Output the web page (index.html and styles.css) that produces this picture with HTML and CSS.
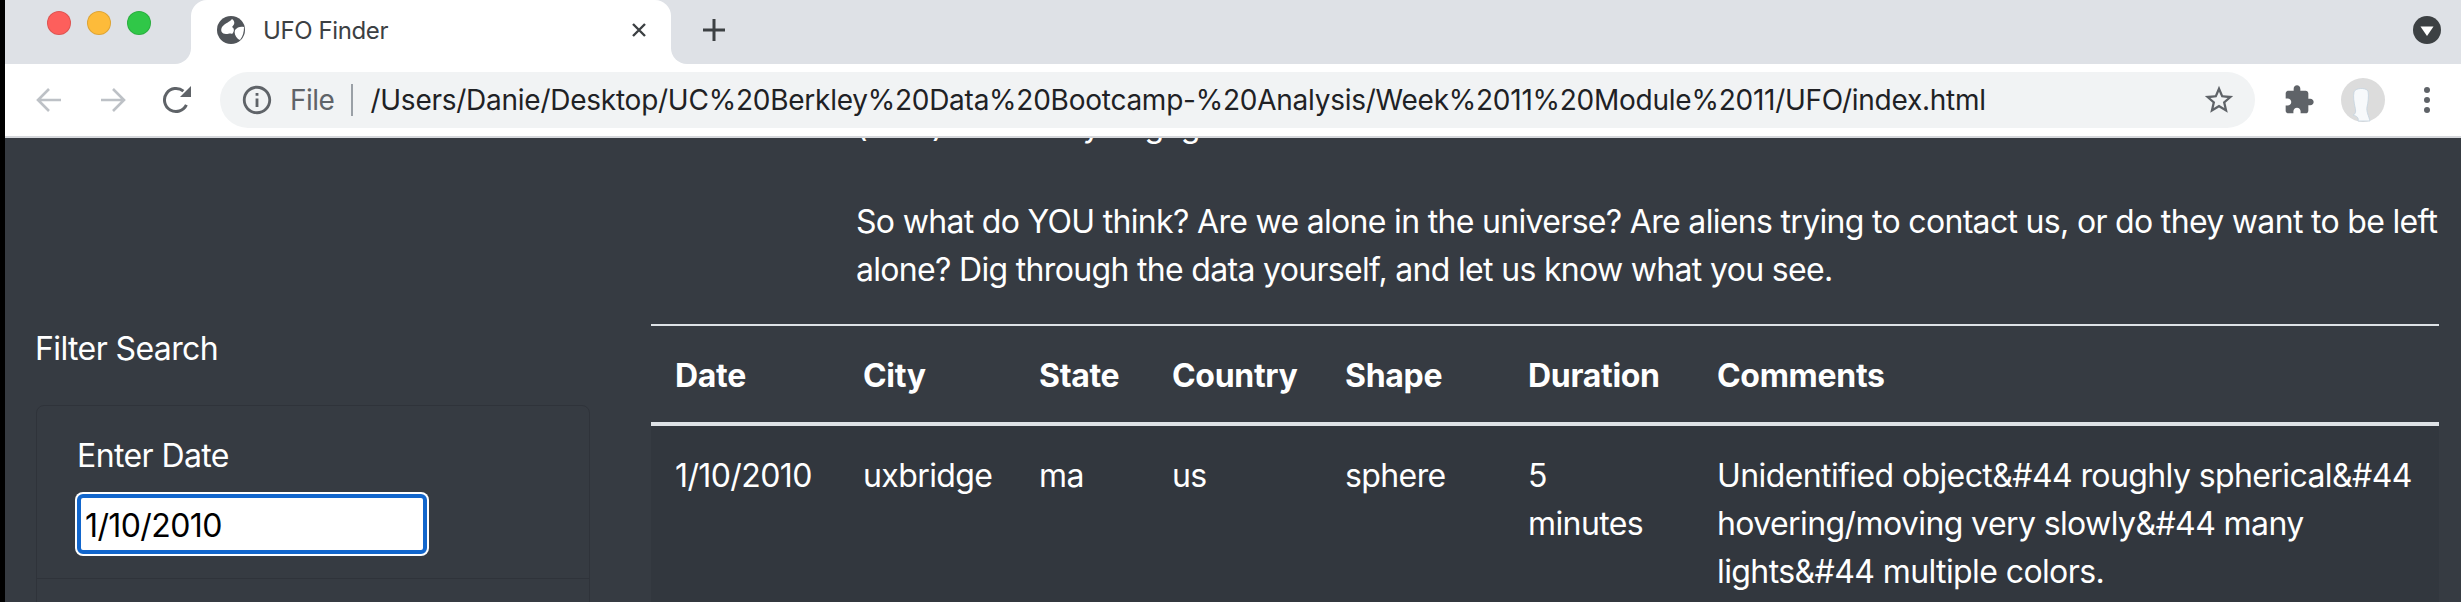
FILE: index.html

```html
<!DOCTYPE html>
<html lang="en">
<head>
  <meta charset="UTF-8" />
  <title>UFO Finder</title>
  <link rel="stylesheet" href="styles.css">
</head>
<body>
  <div class="edge"></div>
  <div class="window">
    <div class="tabstrip">
      <div class="lights">
        <span class="light red"></span>
        <span class="light yellow"></span>
        <span class="light green"></span>
      </div>
      <div class="tab">
        <svg class="globe" viewBox="0 0 28 28">
          <circle cx="14" cy="14" r="14" fill="#505459"/>
          <path d="M15 3C13 6 8 7 5 11C3 15 5 18 9 18C12 18 13 17 15 18C18 15 17 12 15 11C17 9 19 6 15 3z" fill="#fff"/>
          <path d="M27 11C24 10 20 11 18 14C17 17 18 20 21 23L23 24C26 20 27 16 27 11z" fill="#fff"/>
        </svg>
        <span class="tab-title">UFO Finder</span>
        <svg class="tab-close" viewBox="0 0 16 16"><path d="M2 2l12 12M14 2L2 14"/></svg>
      </div>
      <div class="strip-rest">
        <svg class="new-tab" viewBox="0 0 24 24"><path d="M12 1v22M1 12h22"/></svg>
        <span class="tab-search"><svg viewBox="0 0 28 28"><path d="M7.5 10.5h13L14 20z"/></svg></span>
      </div>
    </div>

    <div class="toolbar">
      <span class="slot"><svg class="arrow" viewBox="0 0 26 26"><path d="M25 13H2M13 2L2 13l11 11"/></svg></span>
      <span class="slot"><svg class="arrow" viewBox="0 0 26 26"><path d="M1 13h23M13 2l11 11-11 11"/></svg></span>
      <span class="slot">
        <svg class="reload" viewBox="0 0 28 28">
          <path class="reload-arc" d="M23.4 18.9A11.5 11.5 0 1 1 20.4 5.2"/>
          <path d="M28 0V11H17z"/>
        </svg>
      </span>
      <div class="omnibox">
        <svg class="ico info" viewBox="0 0 24 24"><path d="M11 7h2v2h-2zm0 4h2v6h-2zm1-9C6.48 2 2 6.48 2 12s4.48 10 10 10 10-4.48 10-10S17.52 2 12 2zm0 18c-4.41 0-8-3.59-8-8s3.59-8 8-8 8 3.59 8 8-3.59 8-8 8z"/></svg>
        <span class="scheme">File</span>
        <span class="omni-sep"></span>
        <span class="url">/Users/Danie/Desktop/UC%20Berkley%20Data%20Bootcamp-%20Analysis/Week%2011%20Module%2011/UFO/index.html</span>
        <svg class="ico star" viewBox="0 0 24 24"><path d="M22 9.24l-7.19-.62L12 2 9.19 8.63 2 9.24l5.46 4.73L5.82 21 12 17.27 18.18 21l-1.63-7.03L22 9.24zM12 15.4l-3.76 2.27 1-4.28-3.32-2.88 4.38-.38L12 6.1l1.71 4.04 4.38.38-3.32 2.88 1 4.28L12 15.4z"/></svg>
      </div>
      <div class="toolbar-right">
        <span class="slot"><svg class="ico puzzle" viewBox="0 0 24 24"><path d="M20.5 11H19V7c0-1.1-.9-2-2-2h-4V3.5C13 2.12 11.88 1 10.5 1S8 2.12 8 3.5V5H4c-1.1 0-1.99.9-1.99 2v3.8H3.5c1.49 0 2.7 1.21 2.7 2.7s-1.21 2.7-2.7 2.7H2V20c0 1.1.9 2 2 2h3.8v-1.5c0-1.49 1.21-2.7 2.7-2.7 1.49 0 2.7 1.21 2.7 2.7V22H17c1.1 0 2-.9 2-2v-4h1.5c1.38 0 2.5-1.12 2.5-2.5S21.88 11 20.5 11z"/></svg></span>
        <span class="slot">
          <svg class="avatar" viewBox="0 0 44 44">
            <circle cx="22" cy="22" r="22" fill="#dcdcdc"/>
            <path d="M13 14c1-4 11-5 14-1c1 5 0 12-1 16c-1 4 2 10 3 14H17c1-3-1-5-5-6c3-1 3-4 2-8c-1-5-2-10-1-15z" fill="#f7f9fb" stroke="#c4d3e0" stroke-width="0.8"/>
          </svg>
        </span>
        <span class="slot">
          <svg class="dots" viewBox="0 0 8 28"><circle cx="4" cy="4" r="3"/><circle cx="4" cy="14" r="3"/><circle cx="4" cy="24" r="3"/></svg>
        </span>
      </div>
    </div>

    <div class="page">
      <aside class="sidebar">
        <div class="filter-title">Filter Search</div>
        <div class="card">
          <div class="card-row">
            <label class="field-label" for="date">Enter Date</label>
            <input class="field" id="date" type="text" value="1/10/2010" />
          </div>
          <div class="card-row"></div>
        </div>
      </aside>

      <main class="content">
        <div class="intro">
          <p>(UFO) who really engage</p>
          <p>So what do YOU think? Are we alone in the universe? Are aliens trying to contact us, or do they want to be left alone? Dig through the data yourself, and let us know what you see.</p>
        </div>
        <table class="ufo-table">
          <colgroup>
            <col class="c-date"><col class="c-city"><col class="c-state"><col class="c-country"><col class="c-shape"><col class="c-duration"><col>
          </colgroup>
          <thead>
            <tr>
              <th>Date</th>
              <th>City</th>
              <th>State</th>
              <th>Country</th>
              <th>Shape</th>
              <th>Duration</th>
              <th>Comments</th>
            </tr>
          </thead>
          <tbody>
            <tr>
              <td>1/10/2010</td>
              <td>uxbridge</td>
              <td>ma</td>
              <td>us</td>
              <td>sphere</td>
              <td>5 minutes</td>
              <td>Unidentified object&amp;#44 roughly spherical&amp;#44 hovering/moving very slowly&amp;#44 many lights&amp;#44 multiple colors.</td>
            </tr>
          </tbody>
        </table>
      </main>
    </div>
  </div>
</body>
</html>
```

FILE: styles.css

```css
* { box-sizing: border-box; }

html, body {
  margin: 0;
  height: 100%;
  overflow: hidden;
}
body {
  display: flex;
  font-family: "Inter", "Liberation Sans", sans-serif;
  background: #000;
}
.edge {
  width: 5px;
  flex: none;
  background: #000;
}
.window {
  flex: 1;
  min-width: 0;
  display: flex;
  flex-direction: column;
}

/* tab strip */
.tabstrip {
  height: 64px;
  flex: none;
  display: flex;
  background: linear-gradient(#dee1e6 50%, #fff 50%);
}
.lights {
  width: 186px;
  background: #dee1e6;
  border-bottom-right-radius: 16px;
  display: flex;
  gap: 16px;
  padding: 11px 0 0 42px;
}
.light {
  width: 24px;
  height: 24px;
  border-radius: 50%;
  border: 1px solid rgba(0, 0, 0, .12);
}
.red { background: #fd5f5c; }
.yellow { background: #fdbb3a; }
.green { background: #30c748; }

.tab {
  width: 480px;
  background: #fff;
  border-radius: 16px 16px 0 0;
  display: flex;
  align-items: center;
  padding: 0 24px 4px 26px;
}
.globe {
  width: 28px;
  height: 28px;
  flex: none;
}
.tab-title {
  margin-left: 18px;
  font-size: 24px;
  color: #3c4043;
  letter-spacing: -.4px;
}
.tab-close {
  margin-left: auto;
  width: 16px;
  height: 16px;
  fill: none;
  stroke: #3c4043;
  stroke-width: 2.4;
}
.strip-rest {
  flex: 1;
  background: #dee1e6;
  border-bottom-left-radius: 16px;
  display: flex;
  align-items: center;
  padding: 0 20px 4px 31px;
}
.new-tab {
  width: 24px;
  height: 24px;
  fill: none;
  stroke: #3c4043;
  stroke-width: 3;
}
.tab-search {
  margin-left: auto;
  width: 28px;
  height: 28px;
  border-radius: 50%;
  background: #3c4043;
}
.tab-search svg {
  display: block;
  fill: #fff;
}

/* toolbar */
.toolbar {
  height: 74px;
  flex: none;
  background: #fff;
  border-bottom: 2px solid #d5d7db;
  display: flex;
  align-items: center;
  padding: 0 2px 0 12px;
}
.slot {
  width: 64px;
  height: 56px;
  flex: none;
  display: flex;
  align-items: center;
  justify-content: center;
}
.ico {
  width: 34px;
  height: 34px;
  fill: #5f6368;
  flex: none;
}
.puzzle {
  width: 32px;
  height: 32px;
}
.arrow {
  width: 26px;
  height: 26px;
  fill: none;
  stroke: #bdc1c6;
  stroke-width: 2.6;
}
.reload {
  width: 28px;
  height: 28px;
  fill: #5f6368;
}
.reload-arc {
  fill: none;
  stroke: #5f6368;
  stroke-width: 3;
}
.omnibox {
  flex: 1;
  min-width: 0;
  height: 56px;
  margin: 0 12px 0 11px;
  padding: 0 19px 0 20px;
  border-radius: 28px;
  background: #f1f3f4;
  display: flex;
  align-items: center;
}
.scheme {
  margin-left: 16px;
  font-size: 28px;
  color: #5f6368;
  letter-spacing: -.5px;
}
.omni-sep {
  width: 2px;
  height: 32px;
  margin: 0 17px;
  background: #9aa0a6;
}
.url {
  font-size: 28px;
  color: #202124;
  white-space: nowrap;
  letter-spacing: -.25px;
}
.star { margin-left: auto; }
.toolbar-right {
  display: flex;
  flex: none;
}
.avatar {
  width: 44px;
  height: 44px;
}
.dots {
  width: 8px;
  height: 28px;
  fill: #5f6368;
}

/* page */
.page {
  flex: 1;
  min-height: 0;
  overflow: hidden;
  background: #363b42;
  color: #fff;
  font-size: 32px;
  line-height: 48px;
  display: flex;
  letter-spacing: -.6px;
}
.sidebar {
  width: 646px;
  flex: none;
  padding: 187px 0 0 30px;
}
.filter-title { margin-bottom: 32px; }
.card {
  width: 554px;
  margin-left: 1px;
  border: 1px solid #2f333a;
  border-radius: 8px;
}
.card-row {
  padding: 26px 40px 24px;
  border-bottom: 1px solid #2f333a;
}
.card-row:last-child { border-bottom: 0; }
.field-label { display: block; margin-bottom: 14px; }
.field {
  display: block;
  width: 350px;
  height: 60px;
  padding: 2px 4px 0;
  border: 4px solid #1266cc;
  border-radius: 6px;
  box-shadow: 0 0 0 2px #fff;
  background: #fff;
  color: #000;
  font: inherit;
  letter-spacing: inherit;
  outline: none;
}

.content {
  flex: 1;
  min-width: 0;
  margin-top: -36px;
  padding-right: 22px;
}
.intro {
  padding-left: 205px;
  margin-bottom: 30px;
  margin-right: -8px;
  letter-spacing: -.68px;
}
.intro p { margin: 0 0 48px; }
.intro p:last-child { margin-bottom: 0; }

.ufo-table {
  width: 100%;
  border-collapse: collapse;
  table-layout: fixed;
}
.c-date { width: 188px; }
.c-city { width: 176px; }
.c-state { width: 133px; }
.c-country { width: 173px; }
.c-shape { width: 183px; }
.c-duration { width: 189px; }
.ufo-table th, .ufo-table td {
  padding: 26px 24px 22px;
  text-align: left;
  vertical-align: top;
}
.ufo-table thead tr {
  border-top: 2px solid #dee2e6;
  border-bottom: 4px solid #dee2e6;
}
.ufo-table th {
  font-weight: 700;
  letter-spacing: -.3px;
}
.ufo-table tbody { background: #32373e; }
```
